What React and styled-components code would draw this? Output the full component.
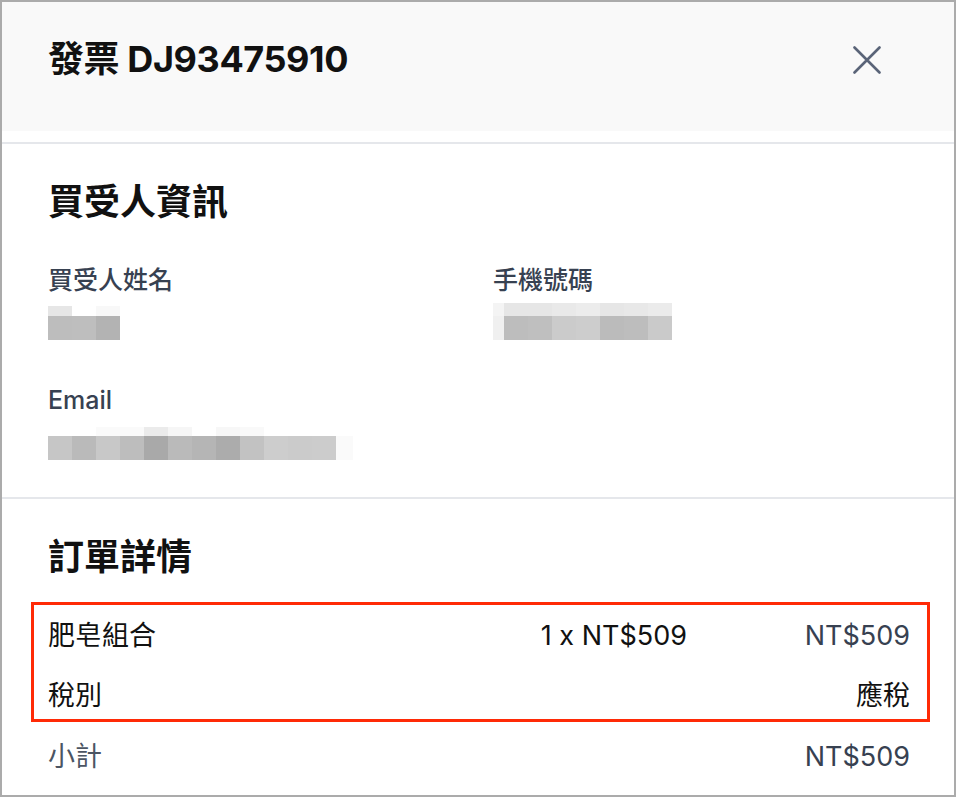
import React from "react";
import styled, { createGlobalStyle } from "styled-components";

const GlobalStyle = createGlobalStyle`
  html, body {
    margin: 0;
    padding: 0;
    background: #ffffff;
  }
  body {
    font-family: Inter, "Noto Sans CJK TC", "Noto Sans", sans-serif;
    -webkit-font-smoothing: antialiased;
  }
`;

const Frame = styled.div`
  width: 956px;
  height: 797px;
  box-sizing: border-box;
  border: 2px solid #ababab;
  overflow: hidden;
  background: #ffffff;
`;

const Header = styled.div`
  height: 129px;
  box-sizing: border-box;
  padding: 36px 72px 0 46px;
  background: #f9f9f9;
  display: flex;
  align-items: flex-start;
  justify-content: space-between;
  margin-bottom: 11px;
`;

const Title = styled.h1`
  margin: 0;
  font-size: 36px;
  line-height: 43px;
  font-weight: 700;
  color: #111111;
  letter-spacing: -0.4px;
`;

const CloseButton = styled.button`
  border: 0;
  padding: 0;
  background: transparent;
  width: 30px;
  height: 43px;
  display: flex;
  align-items: center;
  justify-content: center;
  color: #5a6478;
  cursor: pointer;
`;

const Section = styled.section`
  border-top: 2px solid #e5e7eb;
  padding: 37px 44px 37px 46px;
`;

const Heading = styled.h2`
  margin: 0;
  font-size: 36px;
  line-height: 43px;
  font-weight: 700;
  color: #111111;
`;

const FieldGrid = styled.div`
  margin-top: 38px;
  display: grid;
  grid-template-columns: 445px 1fr;
  row-gap: 42px;
`;

const Field = styled.div`
  display: flex;
  flex-direction: column;
  align-items: flex-start;
`;

const Label = styled.div`
  font-size: 25px;
  line-height: 36px;
  font-weight: 500;
  color: #374151;
`;

const Mosaic = styled.div`
  margin-top: ${(p) => 18 - p.$top}px;
  display: flex;
  flex-direction: column;
`;

const MosaicRow = styled.div`
  display: flex;
  height: ${(p) => p.$h}px;
`;

const Cell = styled.span`
  display: block;
  width: ${(p) => p.$w || 24}px;
  height: 100%;
  background: ${(p) => p.$c};
`;

const Highlight = styled.div`
  margin: 23px -20px 0 -17px;
  padding: 13px 17px 5px 14px;
  border: 3px solid #ff2a06;
  display: flex;
  flex-direction: column;
  gap: 24px;
`;

const ItemRow = styled.div`
  display: grid;
  grid-template-columns: 1fr auto 223px;
  align-items: center;
  font-size: 27px;
  line-height: 36px;
  color: #111111;
`;

const ItemCell = styled.div`
  text-align: ${(p) => p.$align || "left"};
  color: ${(p) => p.$color || "inherit"};
`;

const SummaryRow = styled.div`
  margin-top: 17px;
  display: flex;
  justify-content: space-between;
  font-size: 27px;
  line-height: 36px;
  color: #4b5563;
`;

const Amount = styled.span`
  color: #374151;
`;

const nameCells = {
  top: 10,
  rows: [
    ["#e6e6e6", "#ffffff", "#f8f8f8"],
    ["#bdbdbd", "#bebebe", "#b3b3b3"],
  ],
};

const phoneCells = {
  top: 13,
  lead: 11,
  rows: [
    ["#f4f4f4", "#e6e6e6", "#e6e6e6", "#e9e9e9", "#ececec", "#e6e6e6", "#e8e8e8", "#ebebeb"],
    ["#f0f0f0", "#bdbdbd", "#bfbfbf", "#cbcbcb", "#cdcdcd", "#bbbbbb", "#bdbdbd", "#cacaca"],
  ],
};

const emailCells = {
  top: 9,
  tail: 17,
  rows: [
    ["#ffffff", "#ffffff", "#fafafa", "#fafafa", "#ebebeb", "#f6f6f6", "#ffffff", "#f7f7f7", "#f9f9f9", "#ffffff", "#ffffff", "#ffffff", "#ffffff"],
    ["#c6c6c6", "#bababa", "#c8c8c8", "#bdbdbd", "#a9a9a9", "#bababa", "#b5b5b5", "#acacac", "#c2c2c2", "#cdcdcd", "#cbcbcb", "#cccccc", "#fafafa"],
  ],
};

function Blurred({ data }) {
  const last = data.rows[0].length - 1;
  const widthOf = (i) => {
    if (i === 0 && data.lead) return data.lead;
    if (i === last && data.tail) return data.tail;
    return 24;
  };
  return (
    <Mosaic $top={data.top}>
      {data.rows.map((row, r) => (
        <MosaicRow key={r} $h={r === 0 ? data.top : 24}>
          {row.map((c, i) => (
            <Cell key={i} $c={c} $w={widthOf(i)} />
          ))}
        </MosaicRow>
      ))}
    </Mosaic>
  );
}

function CloseIcon() {
  return (
    <svg width="28" height="28" viewBox="0 0 28 28" fill="none">
      <path
        d="M1.5 1.5L26.5 26.5M26.5 1.5L1.5 26.5"
        stroke="currentColor"
        strokeWidth="2.6"
        strokeLinecap="round"
      />
    </svg>
  );
}

export default function App() {
  return (
    <>
      <GlobalStyle />
      <Frame>
        <Header>
          <Title>發票 DJ93475910</Title>
          <CloseButton aria-label="關閉">
            <CloseIcon />
          </CloseButton>
        </Header>

        <Section>
          <Heading>買受人資訊</Heading>
          <FieldGrid>
            <Field>
              <Label>買受人姓名</Label>
              <Blurred data={nameCells} />
            </Field>
            <Field>
              <Label>手機號碼</Label>
              <Blurred data={phoneCells} />
            </Field>
            <Field>
              <Label>Email</Label>
              <Blurred data={emailCells} />
            </Field>
          </FieldGrid>
        </Section>

        <Section>
          <Heading>訂單詳情</Heading>
          <Highlight>
            <ItemRow>
              <ItemCell>肥皂組合</ItemCell>
              <ItemCell $align="right">1 x NT$509</ItemCell>
              <ItemCell $align="right" $color="#374151">NT$509</ItemCell>
            </ItemRow>
            <ItemRow>
              <ItemCell>稅別</ItemCell>
              <ItemCell />
              <ItemCell $align="right">應稅</ItemCell>
            </ItemRow>
          </Highlight>
          <SummaryRow>
            <span>小計</span>
            <Amount>NT$509</Amount>
          </SummaryRow>
        </Section>
      </Frame>
    </>
  );
}
